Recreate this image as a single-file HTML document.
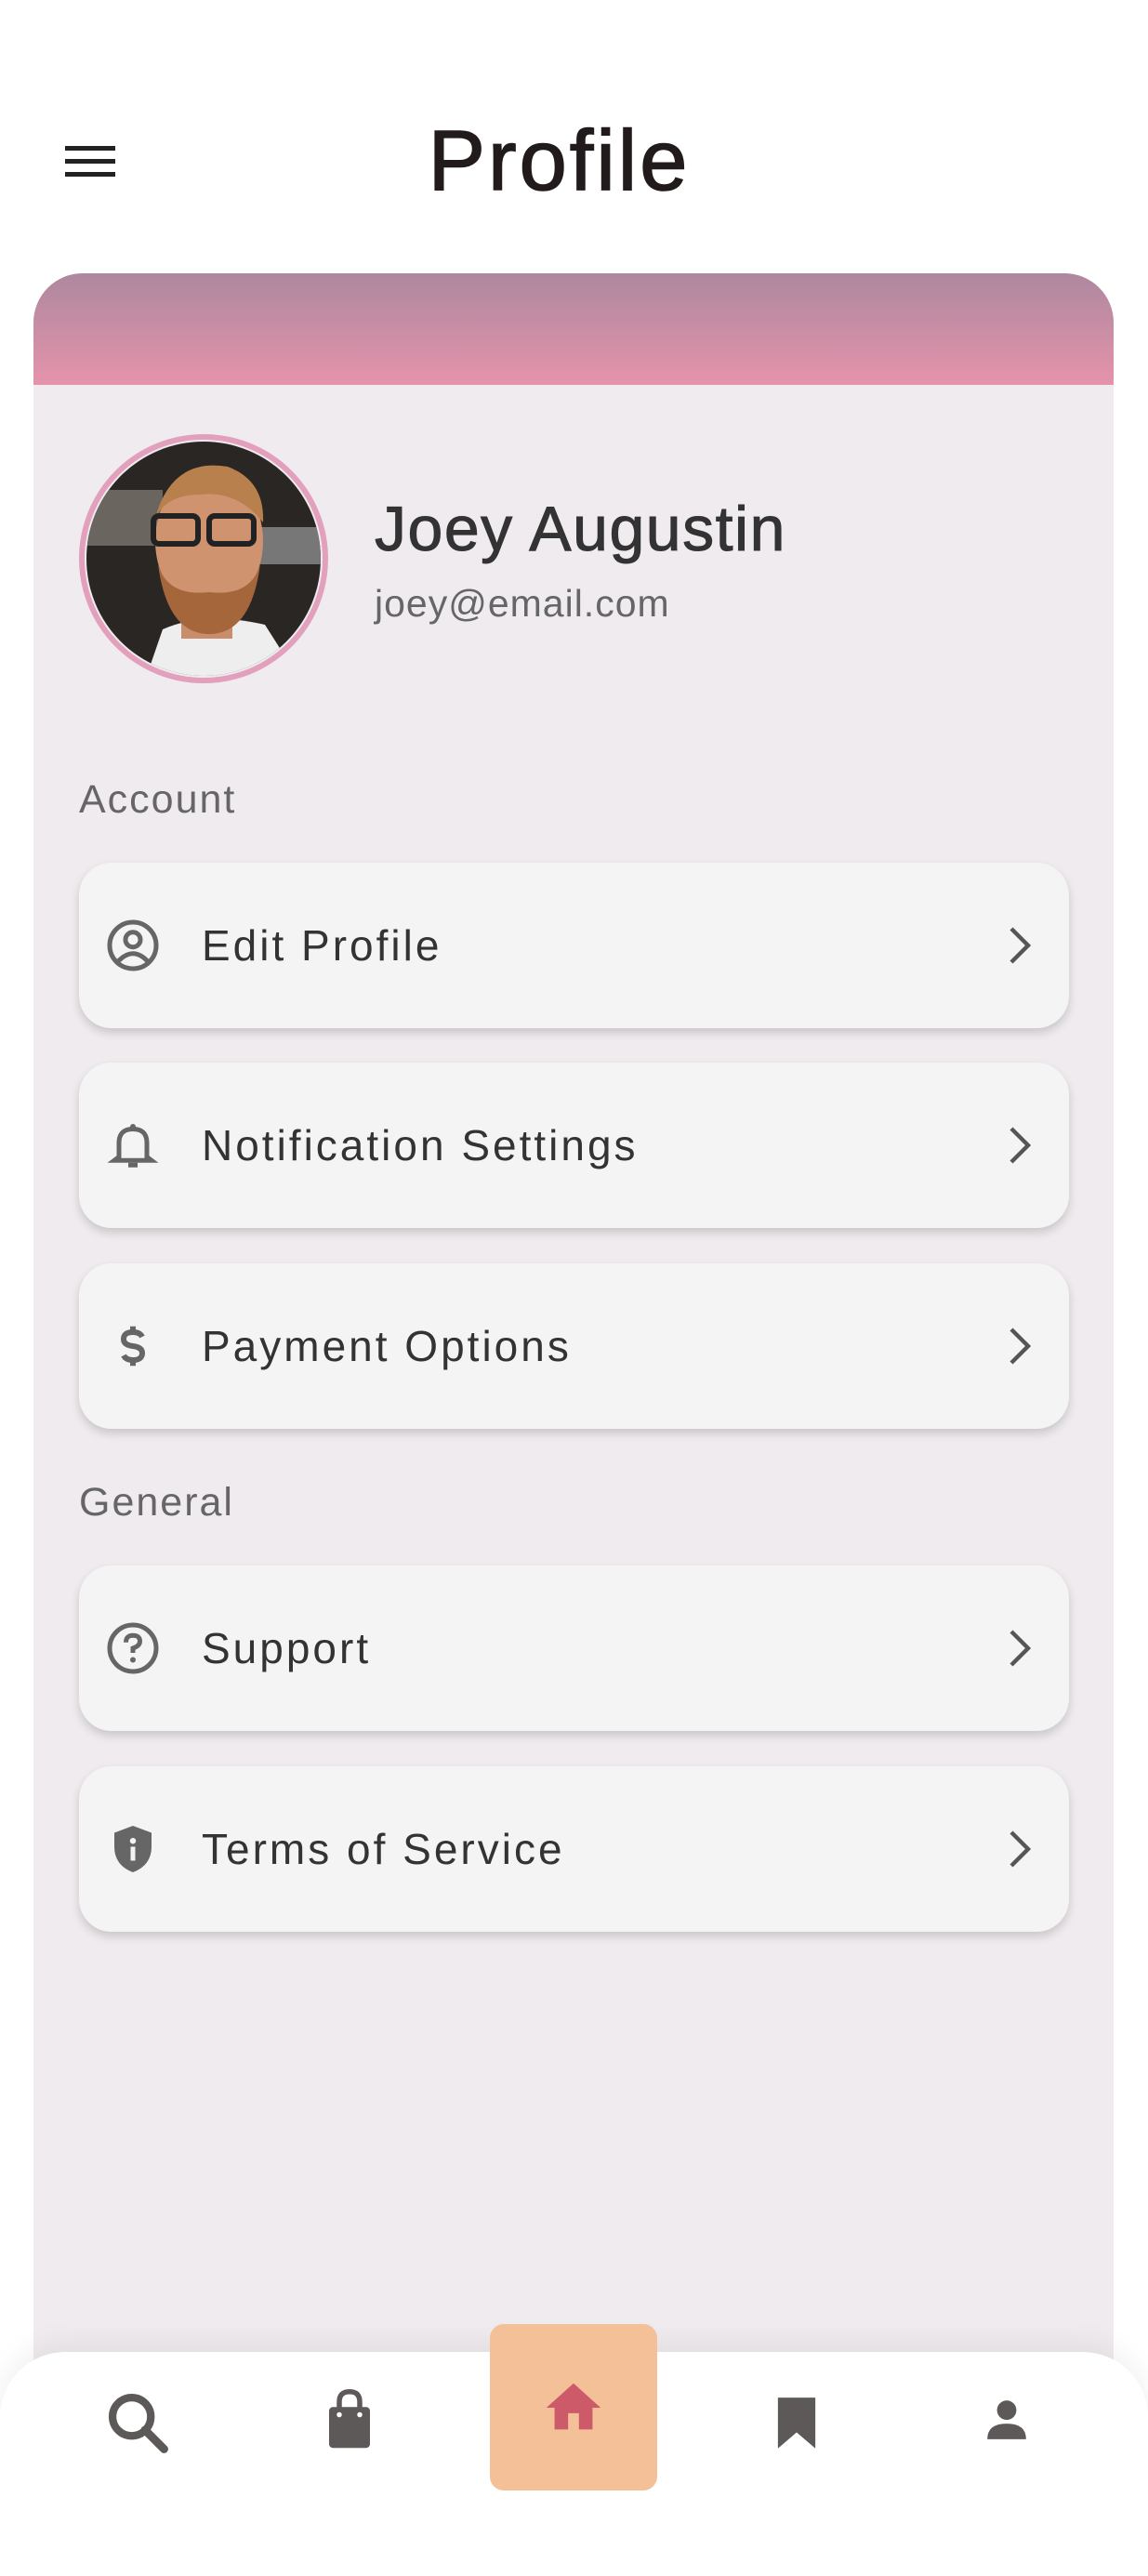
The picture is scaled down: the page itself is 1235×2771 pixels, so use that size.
<!DOCTYPE html>
<html style="overflow:hidden;height:2771px"><head><meta charset="utf-8"><style>
*{margin:0;padding:0;box-sizing:border-box}
body{width:1235px;height:2771px;background:#fff;font-family:"Liberation Sans",sans-serif;position:relative;overflow:hidden;color:#333}
.abs{position:absolute}
.card{left:36px;top:294px;width:1162px;height:2477px;background:#efebef;border-radius:53px 53px 0 0;overflow:hidden}
.hdr{left:0;top:0;width:100%;height:120px;background:linear-gradient(#ad889f,#e593ab)}
.item{position:absolute;left:85px;width:1065px;height:178px;background:#f4f4f4;border-radius:35px;box-shadow:0 5px 10px rgba(0,0,0,.16)}
.item .t{position:absolute;left:132px;top:0;line-height:178px;font-size:46px;color:#333;letter-spacing:3px}
.item svg.ic{position:absolute;left:28px;top:59px}
.item svg.ch{position:absolute;left:991px;top:67px}
.sec{position:absolute;left:85px;font-size:43px;color:#666;letter-spacing:2px}
</style></head><body>
<svg class="abs" style="left:70px;top:154px" width="56" height="40" viewBox="0 0 56 40"><rect x="0" y="3" width="54" height="5" fill="#222"/><rect x="0" y="17" width="54" height="5" fill="#222"/><rect x="0" y="31" width="54" height="5" fill="#222"/></svg>
<div class="abs" style="left:0;width:1203px;top:118px;text-align:center;font-size:92px;line-height:110px;color:#221b1b;letter-spacing:3px;-webkit-text-stroke:1.5px #221b1b">Profile</div>
<div class="abs card"><div class="abs hdr"></div></div>
<svg class="abs" style="left:85px;top:467px" width="268" height="268" viewBox="0 0 268 268">
<defs><clipPath id="c"><circle cx="134" cy="134" r="126"/></clipPath></defs>
<circle cx="134" cy="134" r="131" fill="none" stroke="#e2a0bc" stroke-width="6"/>
<g clip-path="url(#c)">
<rect width="268" height="268" fill="#2a2624"/>
<rect x="0" y="60" width="90" height="60" fill="#6b6560"/>
<rect x="190" y="100" width="78" height="40" fill="#777"/>
<path d="M70 268 L90 210 Q134 190 200 205 L240 268Z" fill="#eee"/>
<rect x="110" y="165" width="55" height="55" fill="#c88d6b"/>
<ellipse cx="140" cy="115" rx="58" ry="75" fill="#d09370"/>
<path d="M85 140 Q95 215 140 215 Q185 215 195 140 Q185 175 140 170 Q95 175 85 140Z" fill="#a5663c"/>
<path d="M82 90 Q100 25 160 35 Q200 50 198 95 Q170 60 130 65 Q95 65 82 90Z" fill="#b7804c"/>
<rect x="80" y="88" width="48" height="30" rx="6" fill="none" stroke="#222" stroke-width="6"/>
<rect x="140" y="88" width="48" height="30" rx="6" fill="none" stroke="#222" stroke-width="6"/>
</g></svg>
<div class="abs" style="left:403px;top:530px;font-size:68px;color:#333;letter-spacing:1.5px;-webkit-text-stroke:1px #333">Joey Augustin</div>
<div class="abs" style="left:403px;top:626px;font-size:41px;color:#666;letter-spacing:1px">joey@email.com</div>
<div class="sec" style="top:836px">Account</div>
<div class="sec" style="top:1592px">General</div>

<div class="item" style="top:928px"><svg class="ic" width="60" height="60" viewBox="0 0 24 24"><circle cx="12" cy="12" r="10" fill="none" stroke="#666" stroke-width="2"/><circle cx="12" cy="9.5" r="3.2" fill="none" stroke="#666" stroke-width="2"/><path d="M5.5 19 Q12 12 18.5 19" fill="none" stroke="#666" stroke-width="2"/></svg><div class="t">Edit Profile</div><svg class="ch" width="40" height="44" viewBox="0 0 20 22"><path d="M6 2 L15 11 L6 20" fill="none" stroke="#555" stroke-width="2.2"/></svg></div>

<div class="item" style="top:1143px"><svg class="ic" width="60" height="60" viewBox="0 0 24 24"><path d="M6 17 V11 Q6 5 12 5 Q18 5 18 11 V17 L20 18.5 H4 Z" fill="none" stroke="#666" stroke-width="2"/><circle cx="12" cy="4" r="1.2" fill="#666"/><path d="M10 20.5 H14" stroke="#666" stroke-width="2"/></svg><div class="t">Notification Settings</div><svg class="ch" width="40" height="44" viewBox="0 0 20 22"><path d="M6 2 L15 11 L6 20" fill="none" stroke="#555" stroke-width="2.2"/></svg></div>

<div class="item" style="top:1359px"><svg class="ic" width="60" height="60" viewBox="0 0 24 24"><path d="M16 8 Q15 6 12 6 Q8 6 8 9 Q8 11.5 12 12 Q16 12.5 16 15 Q16 18 12 18 Q9 18 8 16" fill="none" stroke="#666" stroke-width="2.4"/><path d="M12 3.5 V6 M12 18 V20.5" stroke="#666" stroke-width="2.4"/></svg><div class="t">Payment Options</div><svg class="ch" width="40" height="44" viewBox="0 0 20 22"><path d="M6 2 L15 11 L6 20" fill="none" stroke="#555" stroke-width="2.2"/></svg></div>

<div class="item" style="top:1684px"><svg class="ic" width="60" height="60" viewBox="0 0 24 24"><circle cx="12" cy="12" r="10" fill="none" stroke="#666" stroke-width="2"/><path d="M9 9.5 Q9 6.5 12 6.5 Q15 6.5 15 9 Q15 11 12 12 V14" fill="none" stroke="#666" stroke-width="2"/><circle cx="12" cy="17" r="1.2" fill="#666"/></svg><div class="t">Support</div><svg class="ch" width="40" height="44" viewBox="0 0 20 22"><path d="M6 2 L15 11 L6 20" fill="none" stroke="#555" stroke-width="2.2"/></svg></div>

<div class="item" style="top:1900px"><svg class="ic" width="60" height="60" viewBox="0 0 24 24"><path d="M12 2 L20 5 V11 Q20 19 12 22 Q4 19 4 11 V5 Z" fill="#666"/><circle cx="12" cy="8.5" r="1.3" fill="#f4f4f4"/><rect x="11" y="11" width="2" height="6" fill="#f4f4f4"/></svg><div class="t">Terms of Service</div><svg class="ch" width="40" height="44" viewBox="0 0 20 22"><path d="M6 2 L15 11 L6 20" fill="none" stroke="#555" stroke-width="2.2"/></svg></div>

<div class="abs" style="left:0;top:2530px;width:1235px;height:241px;background:#fff;border-radius:70px 70px 0 0;box-shadow:0 -10px 30px rgba(0,0,0,.06)"></div>
<div class="abs" style="left:527px;top:2500px;width:180px;height:179px;background:#f3c098;border-radius:15px"></div>
<svg class="abs" style="left:110px;top:2568px" width="76" height="76" viewBox="0 0 24 24"><circle cx="10" cy="10" r="6.5" fill="none" stroke="#5e5959" stroke-width="2.6"/><path d="M14.5 14.5 L21 21" stroke="#5e5959" stroke-width="2.8" stroke-linecap="round"/></svg>
<svg class="abs" style="left:347px;top:2570px" width="58" height="66" viewBox="0 0 20 24"><rect x="2" y="7" width="16" height="16" rx="1.5" fill="#5e5959"/><path d="M6 10 V5 Q6 1 10 1 Q14 1 14 5 V10" fill="none" stroke="#5e5959" stroke-width="2"/><circle cx="6" cy="10" r="1" fill="#fff"/><circle cx="14" cy="10" r="1" fill="#fff"/></svg>
<svg class="abs" style="left:582px;top:2555px" width="70" height="70" viewBox="0 0 24 24"><path d="M12 3 L2 12 H5 V20 H10 V14 H14 V20 H19 V12 H22 Z" fill="#cd5a69"/></svg>
<svg class="abs" style="left:834px;top:2576px" width="46" height="58" viewBox="0 0 16 20"><path d="M1 1 H15 V20 L8 14 L1 20 Z" fill="#5e5959"/></svg>
<svg class="abs" style="left:1058px;top:2578px" width="50" height="50" viewBox="0 0 24 24"><circle cx="12" cy="7" r="5" fill="#5e5959"/><path d="M2 22 Q2 14 12 14 Q22 14 22 22 Z" fill="#5e5959"/></svg>
</body></html>
